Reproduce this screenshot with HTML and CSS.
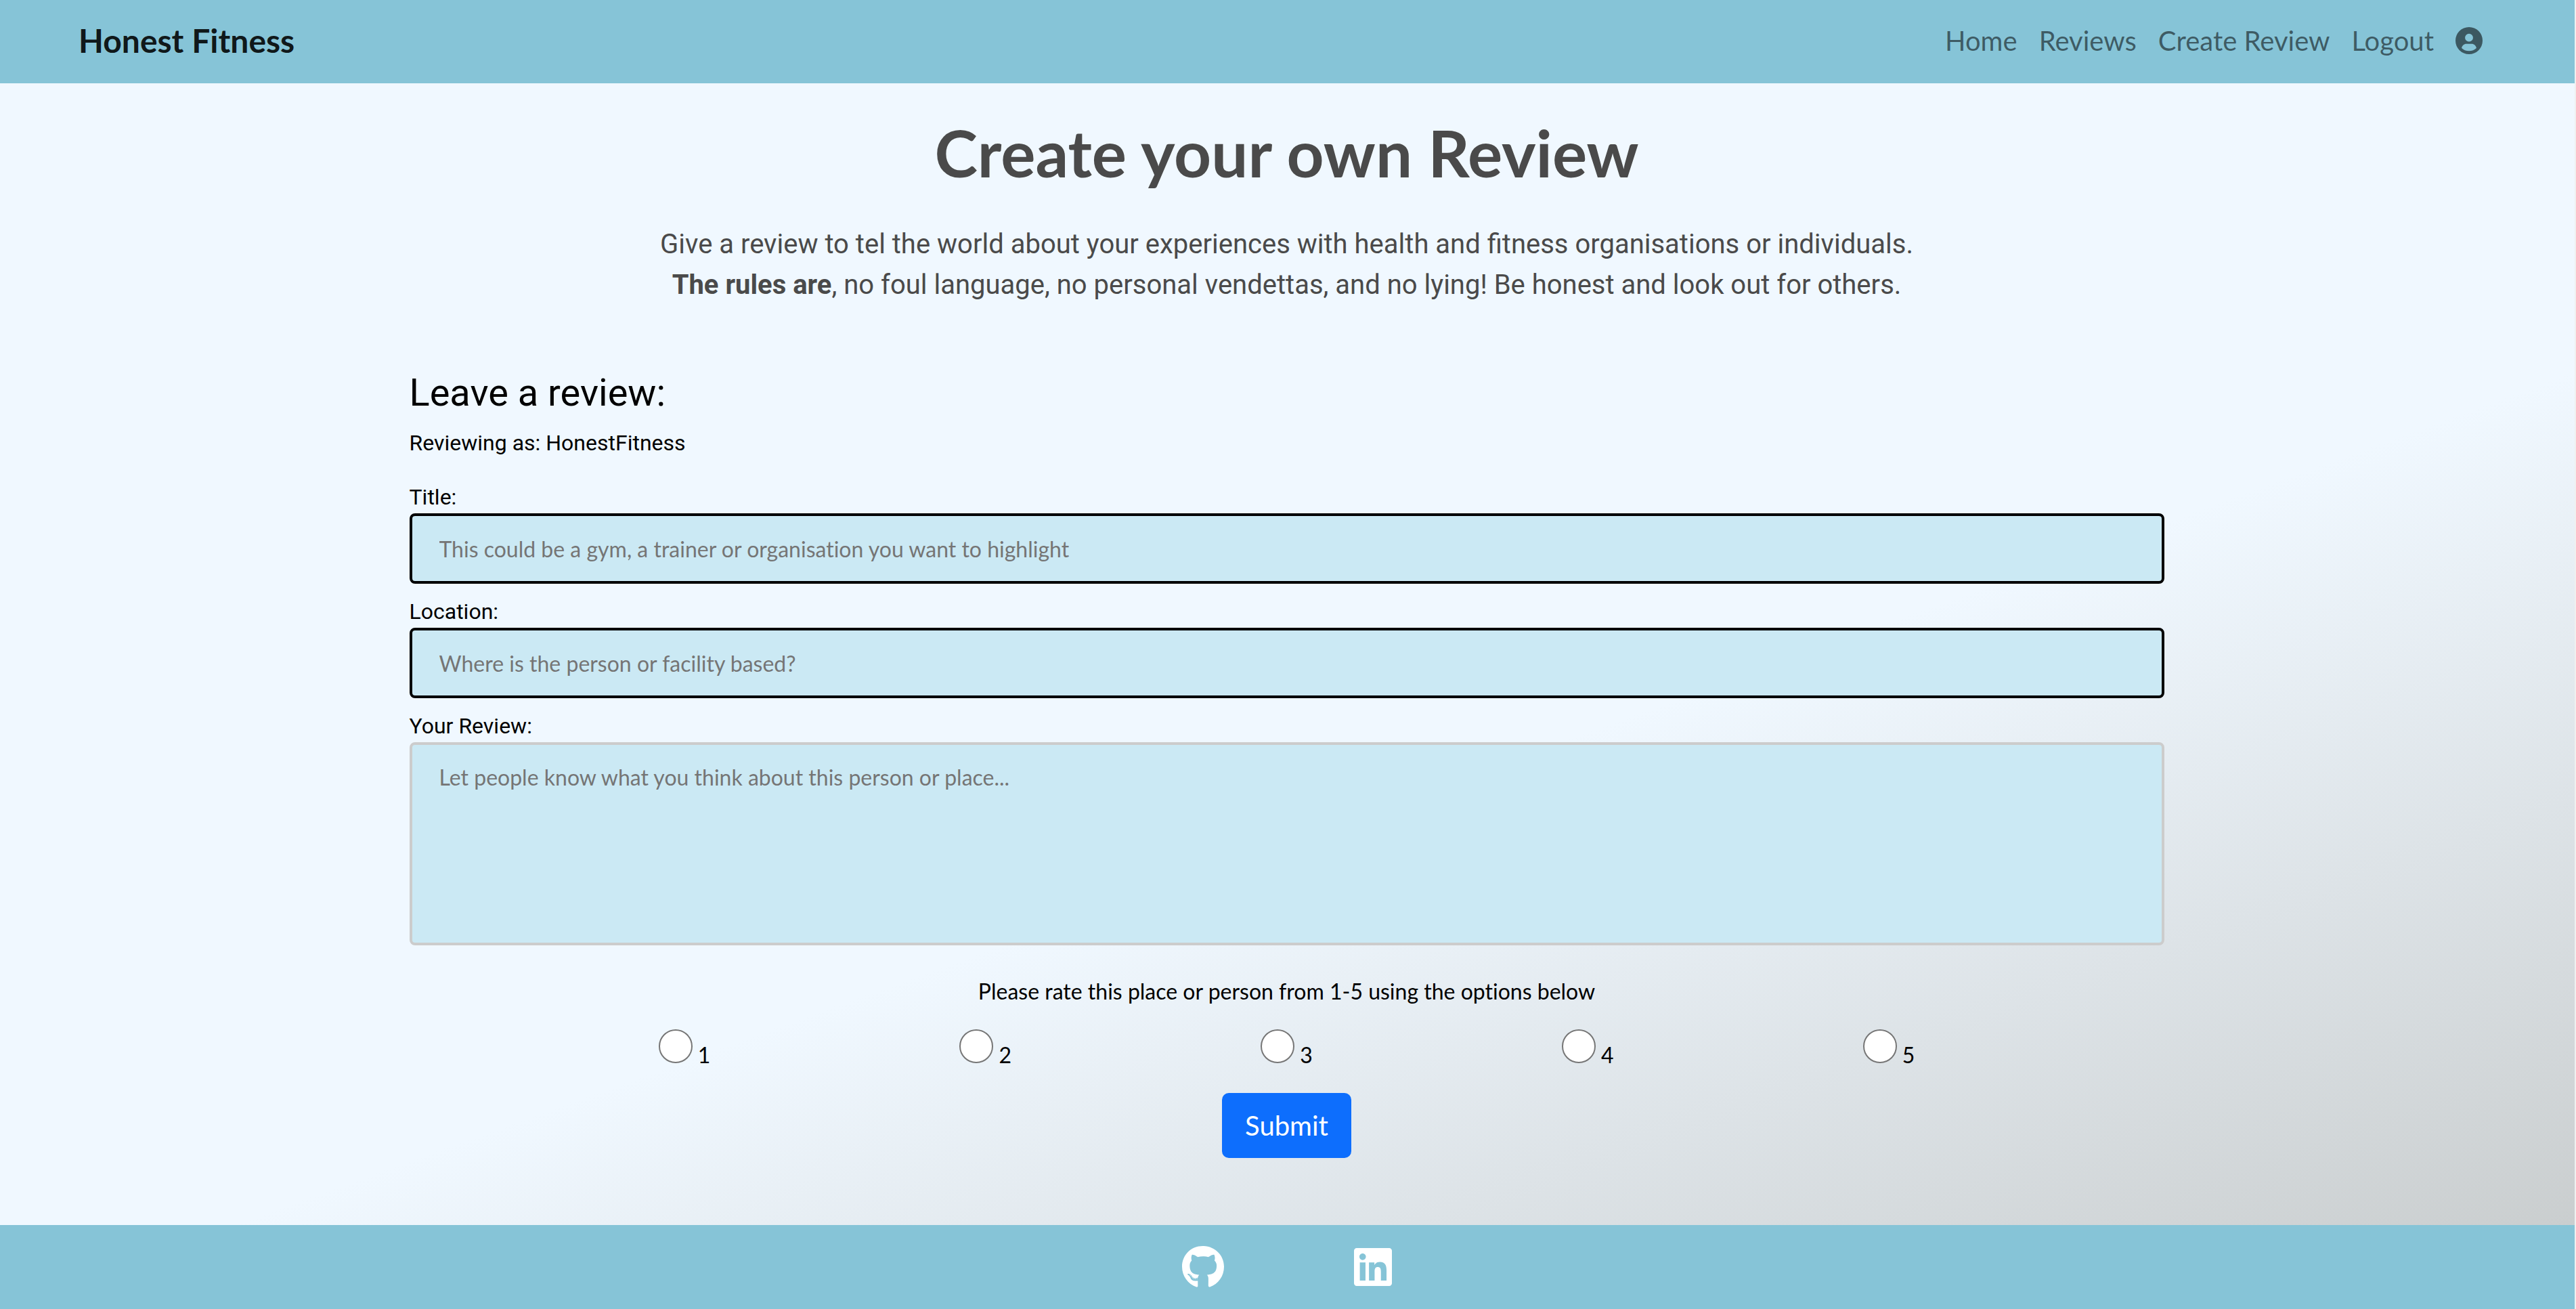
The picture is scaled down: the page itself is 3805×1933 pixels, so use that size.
FILE: index.html
```html
<!DOCTYPE html>
<html lang="en">
<head>
<meta charset="utf-8">
<meta name="viewport" content="width=device-width, initial-scale=1">
<title>Honest Fitness</title>
<link rel="stylesheet" href="styles.css">
</head>
<body>
<header class="site-header">
  <a class="brand" href="#">Honest Fitness</a>
  <nav class="nav">
    <a class="nav-link" href="#">Home</a>
    <a class="nav-link" href="#">Reviews</a>
    <a class="nav-link" href="#">Create Review</a>
    <a class="nav-link" href="#">Logout</a>
    <a class="nav-link" href="#" aria-label="Profile"><svg class="nav-icon" viewBox="0 0 512 512" aria-hidden="true"><path fill="currentColor" fill-rule="evenodd" d="M256 0a256 256 0 1 0 0 512a256 256 0 1 0 0-512zM256 124a76 76 0 1 1 0 152a76 76 0 1 1 0-152zM116 398C124 352 162 318 208 318H304C350 318 388 352 396 398C362 434 312 452 256 452S150 434 116 398z"/></svg></a>
  </nav>
</header>

<main class="page">
  <div class="intro">
    <h1 class="page-title">Create your own Review</h1>
    <p class="lead">Give a review to tel the world about your experiences with health and fitness organisations or individuals.<br><strong>The rules are</strong>, no foul language, no personal vendettas, and no lying! Be honest and look out for others.</p>
  </div>

  <form class="review-form">
    <h2 class="form-title">Leave a review:</h2>
    <p class="author">Reviewing as: HonestFitness</p>
    <div class="field">
      <label for="title">Title:</label>
      <input class="control" id="title" type="text" placeholder="This could be a gym, a trainer or organisation you want to highlight">
    </div>
    <div class="field">
      <label for="location">Location:</label>
      <input class="control" id="location" type="text" placeholder="Where is the person or facility based?">
    </div>
    <div class="field">
      <label for="review">Your Review:</label>
      <textarea class="control control-area" id="review" placeholder="Let people know what you think about this person or place..."></textarea>
    </div>
    <fieldset class="rating">
      <legend class="rating-legend">Please rate this place or person from 1-5 using the options below</legend>
      <div class="rating-options">
        <label><input class="radio" type="radio" name="rating" value="1"> 1</label>
        <label><input class="radio" type="radio" name="rating" value="2"> 2</label>
        <label><input class="radio" type="radio" name="rating" value="3"> 3</label>
        <label><input class="radio" type="radio" name="rating" value="4"> 4</label>
        <label><input class="radio" type="radio" name="rating" value="5"> 5</label>
      </div>
    </fieldset>
    <button class="submit" type="submit">Submit</button>
  </form>
</main>

<footer class="site-footer">
  <a class="social" href="#" aria-label="GitHub"><svg viewBox="0 0 496 512" aria-hidden="true"><path fill="currentColor" d="M165.900 397.400c0 2-2.300 3.600-5.200 3.600-3.300.3-5.600-1.300-5.600-3.600 0-2 2.300-3.600 5.200-3.600 3-.3 5.600 1.300 5.600 3.600zm-31.100-4.500c-.7 2 1.300 4.300 4.300 4.900 2.600 1 5.600 0 6.200-2s-1.300-4.300-4.300-5.200c-2.600-.7-5.500.3-6.200 2.300zm44.200-1.700c-2.900.7-4.900 2.600-4.600 4.900.3 2 2.900 3.300 5.900 2.600 2.900-.7 4.900-2.600 4.600-4.600-.3-1.900-3-3.200-5.900-2.900zM244.800 8C106.100 8 0 113.300 0 252c0 110.900 69.800 205.800 169.500 239.200 12.800 2.300 17.300-5.600 17.300-12.100 0-6.200-.3-40.400-.3-61.400 0 0-70 15-84.700-29.800 0 0-11.400-29.100-27.800-36.600 0 0-22.900-15.700 1.600-15.400 0 0 24.900 2 38.600 25.800 21.900 38.600 58.600 27.500 72.900 20.900 2.300-16 8.800-27.100 16-33.700-55.900-6.200-112.300-14.300-112.300-110.500 0-27.500 7.600-41.300 23.600-58.900-2.600-6.500-11.100-33.300 2.600-67.900 20.900-6.500 69 27 69 27 20-5.600 41.500-8.500 62.800-8.500s42.800 2.900 62.800 8.500c0 0 48.100-33.600 69-27 13.700 34.700 5.200 61.400 2.600 67.900 16 17.700 25.800 31.500 25.800 58.900 0 96.500-58.900 104.200-114.800 110.500 9.200 7.900 17 22.900 17 46.400 0 33.700-.3 75.400-.3 83.600 0 6.500 4.600 14.400 17.300 12.100C428.200 457.800 496 362.900 496 252 496 113.300 383.500 8 244.800 8zM97.200 352.900c-1.300 1-1 3.300.7 5.200 1.600 1.600 3.900 2.300 5.200 1 1.300-1 1-3.300-.7-5.200-1.600-1.600-3.900-2.300-5.200-1zm-10.800-8.100c-.7 1.300.3 2.900 2.300 3.900 1.600 1 3.600.7 4.300-.7.7-1.300-.3-2.900-2.300-3.900-2-.6-3.600-.3-4.300.7zm32.400 35.600c-1.600 1.300-1 4.300 1.300 6.200 2.300 2.300 5.200 2.600 6.500 1 1.300-1.300.7-4.300-1.300-6.200-2.200-2.300-5.200-2.600-6.500-1zm-11.400-14.700c-1.600 1-1.600 3.600 0 5.900 1.600 2.300 4.300 3.300 5.600 2.300 1.600-1.300 1.600-3.900 0-6.200-1.400-2.300-4-3.300-5.600-2z"/></svg></a>
  <a class="social" href="#" aria-label="LinkedIn"><svg viewBox="0 0 448 512" aria-hidden="true"><path fill="currentColor" d="M416 32H31.900C14.300 32 0 46.500 0 64.300v383.400C0 465.500 14.300 480 31.900 480H416c17.600 0 32-14.500 32-32.300V64.300c0-17.800-14.400-32.300-32-32.300zM135.400 416H69V202.200h66.500V416zm-33.200-243c-21.300 0-38.500-17.300-38.500-38.500S80.900 96 102.200 96c21.200 0 38.500 17.300 38.500 38.500 0 21.300-17.200 38.500-38.500 38.500zm282.100 243h-66.400V312c0-24.800-.5-56.700-34.500-56.700-34.600 0-39.900 27-39.900 54.900V416h-66.400V202.200h63.700v29.200h.9c8.900-16.800 30.600-34.500 62.900-34.500 67.200 0 79.700 44.300 79.700 101.900V416z"/></svg></a>
</footer>
</body>
</html>
```
FILE: styles.css
```css
* {
  box-sizing: border-box;
}

body {
  display: flex;
  flex-direction: column;
  min-height: 100vh;
  margin: 0;
  border-right: 2px solid #f0f0f0;
  background: #f0f8ff;
  color: #000;
  font-family: Roboto, "Liberation Sans", sans-serif;
  font-size: 32px;
  line-height: 48px;
}

h1,
h2,
p {
  margin: 0;
  font-weight: 400;
}

a {
  color: inherit;
  text-decoration: none;
}

/* Header */
.site-header {
  display: flex;
  align-items: center;
  justify-content: space-between;
  padding: 14px 120px 17px 116px;
  background: #86c4d7;
  font-family: Lato, "Liberation Sans", sans-serif;
}

.brand {
  color: rgba(0, 0, 0, 0.9);
  font-size: 48px;
  font-weight: 700;
  line-height: 92px;
}

.nav {
  display: flex;
  align-items: center;
  color: rgba(0, 0, 0, 0.55);
  font-size: 40px;
  line-height: 60px;
}

.nav-link {
  padding: 0 16px;
}

.nav-icon {
  display: block;
  width: 40px;
  height: 40px;
}

/* Page */
.page {
  flex: 1;
  padding: 44px 26px 95px 24px;
  background: linear-gradient(160deg, #f0f8ff 59%, #cacecf);
}

.intro {
  color: #4a4a4a;
  text-align: center;
}

.page-title {
  font-family: Lato, "Liberation Sans", sans-serif;
  font-size: 96px;
  font-weight: 700;
  line-height: 115px;
}

.lead {
  margin-top: 49px;
  font-size: 40px;
  line-height: 60px;
}

.lead strong {
  font-weight: 700;
}

/* Review form */
.review-form {
  display: flex;
  flex-direction: column;
  max-width: 2592px;
  margin: 96px auto 0;
}

.form-title {
  font-size: 56px;
  line-height: 67px;
}

.author {
  margin: 16px 0 32px;
}

.field {
  display: flex;
  flex-direction: column;
  margin-bottom: 17px;
}

.control {
  width: 100%;
  height: 104px;
  padding: 24px 40px;
  border: 4px solid #000;
  border-radius: 8px;
  background: #cbe9f4;
  color: #000;
  font-family: Lato, "Liberation Sans", sans-serif;
  font-size: 32px;
  font-variant-ligatures: none;
  line-height: 48px;
}

.control::placeholder {
  color: #757575;
}

.control-area {
  height: 300px;
  border-color: #ccc;
  resize: none;
}

.rating {
  margin: 27px 0 0;
  padding: 0;
  border: 0;
  font-family: Lato, "Liberation Sans", sans-serif;
  font-variant-ligatures: none;
}

.rating-legend {
  width: 100%;
  padding: 0;
  text-align: center;
}

.rating-options {
  display: flex;
  justify-content: space-evenly;
  margin: 32px 0;
}

.radio {
  appearance: none;
  width: 50px;
  height: 50px;
  margin: 0;
  border: 2px solid #767676;
  border-radius: 50%;
  background: #fff;
  vertical-align: baseline;
}

.submit {
  align-self: center;
  padding: 18px 34px;
  border: 0;
  border-radius: 10px;
  background: #0d6efd;
  color: #fff;
  font-family: Lato, "Liberation Sans", sans-serif;
  font-size: 40px;
  line-height: 60px;
}

/* Footer */
.site-footer {
  display: flex;
  align-items: center;
  justify-content: center;
  gap: 192px;
  padding: 30px 32px 30px 30px;
  background: #86c4d7;
  color: #fff;
}

.social svg {
  display: block;
  height: 64px;
}
```
